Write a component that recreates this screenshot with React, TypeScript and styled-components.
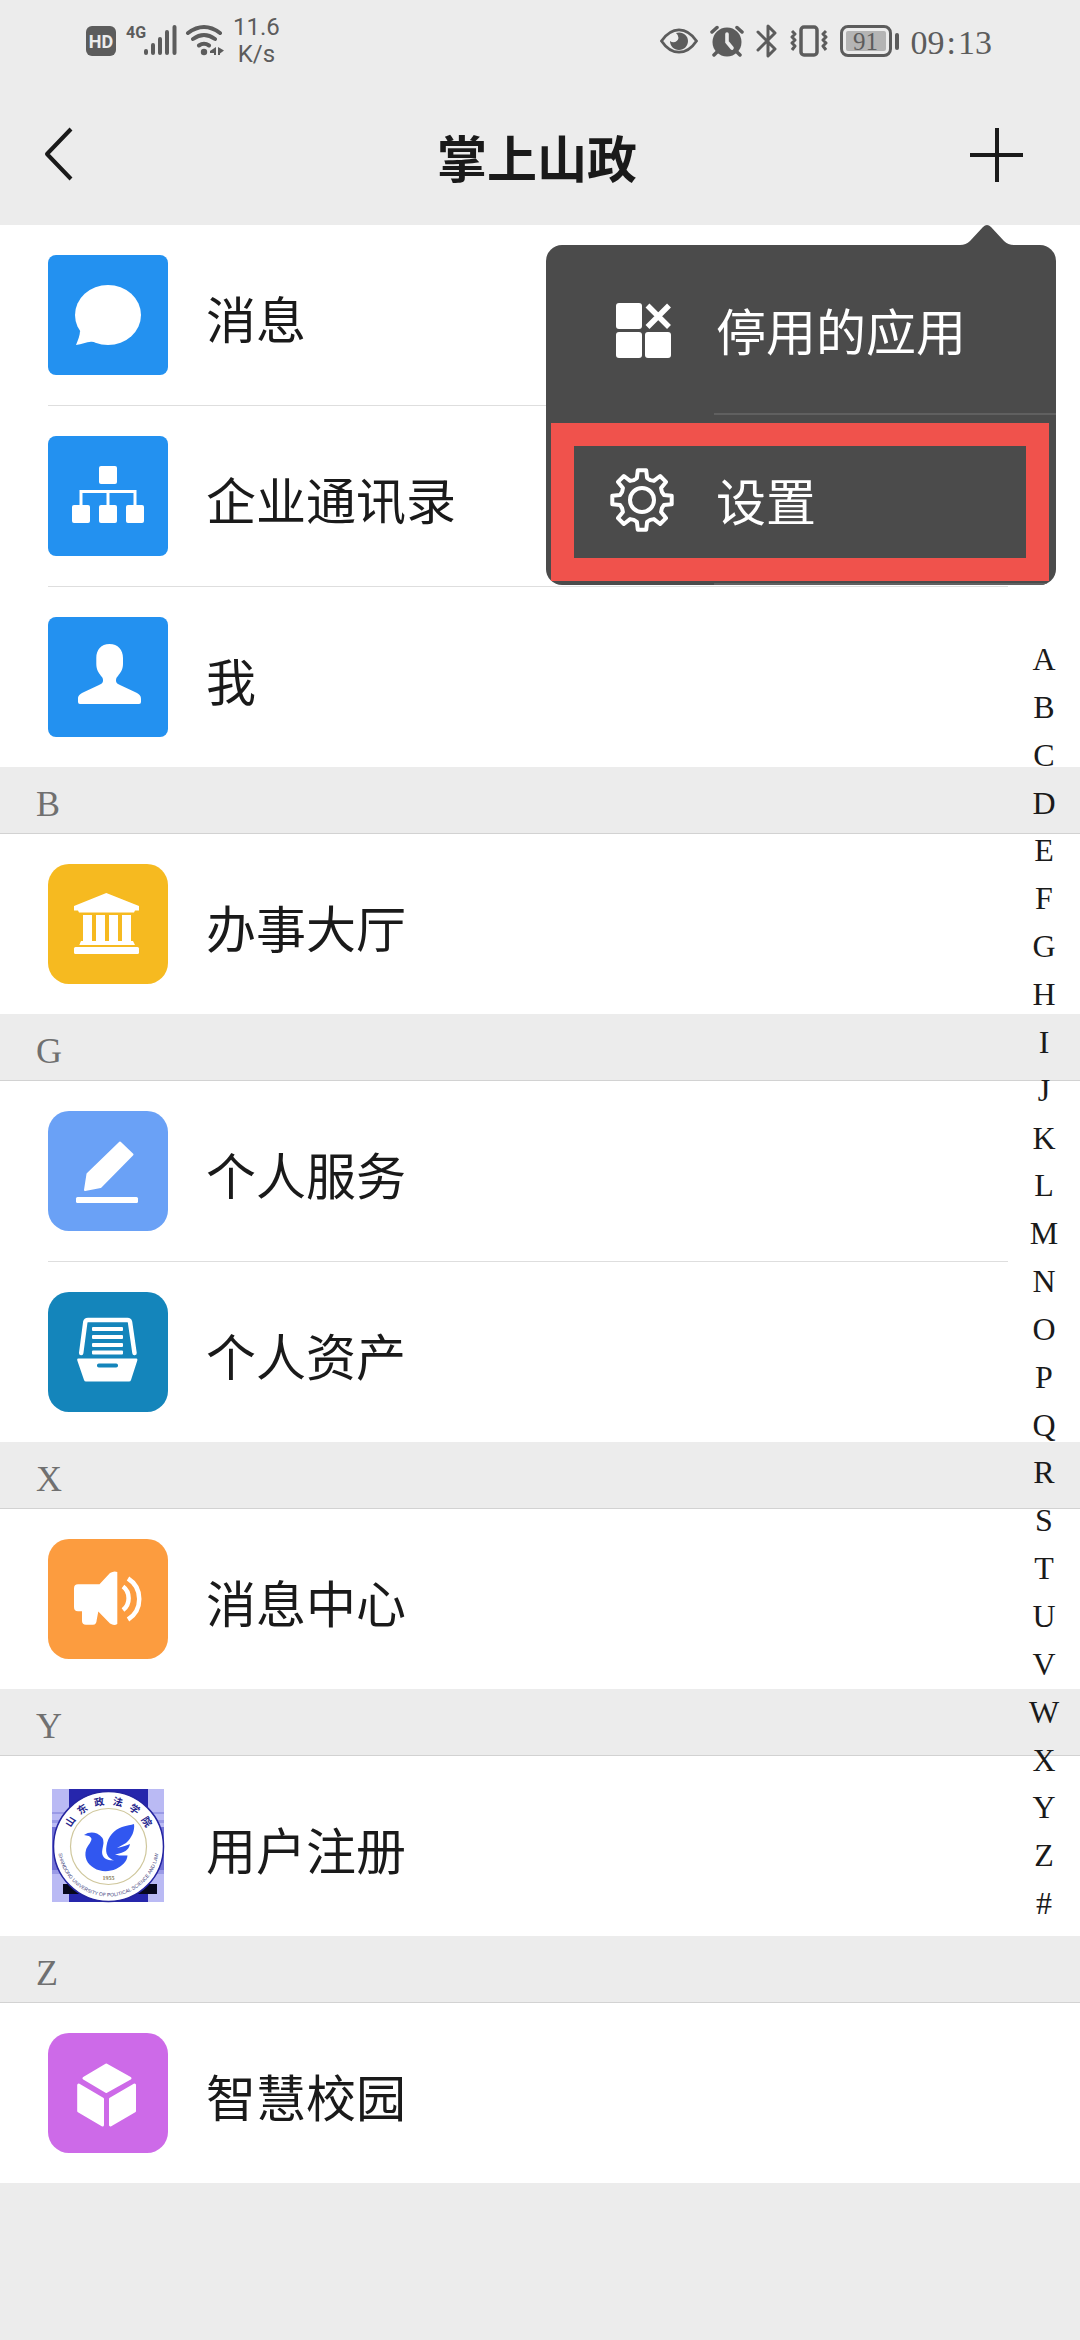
import React from "react";
import styled, { createGlobalStyle } from "styled-components";

const GlobalStyle = createGlobalStyle`
  *, *::before, *::after { box-sizing: border-box; }
  html { background: #ececec; }
  body { margin: 0; background: #ececec; }
`;

const cjk = `"Noto Sans CJK SC", sans-serif`;
const serif = `"Liberation Serif", "Noto Sans CJK SC", serif`;

const Screen = styled.div`
  position: relative;
  color: #1a1a1a;
  font-family: ${cjk};
`;

/* ---------- status bar ---------- */

const StatusBar = styled.div`
  display: flex;
  justify-content: space-between;
  align-items: center;
  height: 82px;
  padding: 0 88px 0 86px;
  color: #5c5c5c;
`;

const StatusGroup = styled.div<{ $gap: number }>`
  display: flex;
  align-items: center;
  gap: ${(p) => p.$gap}px;
`;

const NetSpeed = styled.div`
  font: 24px/27px Roboto, sans-serif;
  text-align: center;
`;

const Battery = styled.div`
  display: flex;
  align-items: center;
  gap: 3px;
  &::after {
    content: "";
    width: 4px;
    height: 17px;
    border-radius: 2px;
    background: #5c5c5c;
  }
`;

const BatteryBody = styled.div`
  width: 52px;
  height: 32px;
  padding: 3px;
  border: 3px solid #5c5c5c;
  border-radius: 8px;
`;

const BatteryLevel = styled.div`
  height: 20px;
  border-radius: 2px;
  background: #b4b4b4;
  font: 25px/22px ${serif};
  text-align: center;
`;

const Clock = styled.time`
  display: flex;
  gap: 2px;
  padding-top: 4px;
  font: 34px/36px ${serif};
`;

/* ---------- title bar ---------- */

const Header = styled.header`
  position: relative;
  background: #ececec;
`;

const TitleBar = styled.div`
  display: grid;
  grid-template-columns: 1fr auto 1fr;
  align-items: center;
  height: 143px;
  padding: 0 48px 0 42px;
`;

const Title = styled.h1`
  margin: 0;
  padding-top: 4px;
  font-size: 50px;
  line-height: 60px;
  font-weight: 700;
`;

const IconButton = styled.button<{ $end?: boolean }>`
  display: flex;
  justify-self: ${(p) => (p.$end ? "end" : "start")};
  padding: 4px 0;
  border: 0;
  background: none;
  color: #1a1a1a;
`;

/* ---------- popup menu ---------- */

const Menu = styled.div`
  position: absolute;
  z-index: 2;
  top: calc(100% + 20px);
  right: 24px;
  width: 510px;
  border-radius: 16px;
  background: #4b4b4b;
`;

const MenuArrow = styled.svg`
  position: absolute;
  right: 42px;
  bottom: 100%;
  display: block;
`;

const MenuItem = styled.button`
  position: relative;
  display: grid;
  grid-template-columns: 64px 1fr;
  gap: 40px;
  align-items: center;
  width: 100%;
  height: 170px;
  padding: 0 0 0 64px;
  border: 0;
  background: none;
  color: #fff;
  font-family: ${cjk};
  text-align: left;

  &:last-child {
    border-radius: 0 0 16px 16px;
    overflow: hidden;
  }
`;

const MenuLabel = styled.span`
  display: flex;
  align-items: center;
  height: 100%;
  padding-left: 2px;
  border-bottom: 2px solid #606060;
  font-size: 50px;
  line-height: 60px;
`;

const Highlight = styled.span`
  position: absolute;
  inset: 8px 7px 4px 5px;
  border: 23px solid #f0524c;
  pointer-events: none;
`;

/* ---------- list ---------- */

const Section = styled.section`
  background: #fff;
`;

const SectionTitle = styled.h2`
  margin: 0;
  height: 67px;
  padding: 8px 36px 0;
  border-bottom: 1px solid #d2d2d2;
  background: #ececec;
  color: #707070;
  font: 36px/58px ${serif};
`;

const Rows = styled.ul`
  margin: 0;
  padding: 0 72px 0 48px;
  list-style: none;
`;

const Row = styled.li`
  & + & {
    border-top: 1px solid #dedede;
  }
`;

const RowLink = styled.a`
  display: flex;
  align-items: center;
  gap: 38px;
  padding: 30px 0;
  color: inherit;
  text-decoration: none;
`;

const Tile = styled.span<{ $color: string; $round: number }>`
  flex: none;
  width: 120px;
  height: 120px;
  overflow: hidden;
  border-radius: ${(p) => p.$round}px;
  background: ${(p) => p.$color};
  color: #fff;
  svg { display: block; }
`;

const RowLabel = styled.span`
  padding-top: 4px;
  font-size: 50px;
  line-height: 60px;
`;

/* ---------- letter index ---------- */

const LetterIndex = styled.nav`
  position: absolute;
  z-index: 1;
  top: 636px;
  right: 0;
  display: grid;
  grid-auto-rows: 1fr;
  width: 72px;
  height: 1292px;
`;

const Letter = styled.a`
  color: #1a1a1a;
  font: 32px/47px ${serif};
  text-align: center;
  text-decoration: none;
`;

/* ---------- drawings ---------- */

const Glyph = ({ children }: { children: React.ReactNode }) => (
  <svg width="120" height="120" viewBox="0 0 120 120" fill="currentColor" aria-hidden="true">
    {children}
  </svg>
);

const ChatGlyph = () => (
  <Glyph>
    <ellipse cx="60" cy="60" rx="33" ry="30" />
    <path d="M28 90C30 85 32 80 32 76L46 82V87C40 85.500 35 89 28 90Z" />
  </Glyph>
);

const OrgGlyph = () => (
  <Glyph>
    <rect x="51" y="30" width="18" height="18" rx="2" />
    <rect x="24" y="69" width="18" height="18" rx="2" />
    <rect x="51" y="69" width="18" height="18" rx="2" />
    <rect x="78" y="69" width="18" height="18" rx="2" />
    <path d="M33 70V55.500H87V70M60 55.500V70" fill="none" stroke="currentColor" strokeWidth="3" />
  </Glyph>
);

const PersonGlyph = () => (
  <Glyph>
    <path d="M61.500 27C70 27 75 33 75 41V47C75 53 72 56 70 59C68 61 68 62 68 64C68 66 70 67 72 68L88 75.500C92 77.500 93 79 93 82V85Q93 87 91 87H32Q30 87 30 85V82C30 79 31 77.500 35 75.500L51 68C53 67 55 66 55 64C55 62 55 61 53 59C51 56 48.300 53 48.300 47V41C48.300 33 53 27 61.500 27Z" />
  </Glyph>
);

const HallGlyph = () => (
  <Glyph>
    <path d="M58.300 29L91 42V46.500H87L86 48.500H31L30 46.500H26V42Z" />
    {[35, 48, 61, 74].map((x) => (
      <rect key={x} x={x} y="51" width="9" height="26" />
    ))}
    <path d="M33 77H85L87 81H31.300Z" />
    <rect x="26" y="83" width="65" height="7" rx="1.500" />
  </Glyph>
);

const PencilGlyph = () => (
  <Glyph>
    <path d="M72 31.500L84.500 43.500L52.500 76L37 79L39.500 63Z" stroke="currentColor" strokeWidth="2" strokeLinejoin="round" />
    <rect x="28" y="86" width="62" height="6" rx="1.500" />
  </Glyph>
);

const DrawerGlyph = () => (
  <Glyph>
    <path d="M33.200 61L37.300 30Q37.700 28 40 28H79.500Q81.500 28 82 30L86.500 61" fill="none" stroke="currentColor" strokeWidth="4.500" strokeLinecap="round" />
    {[35, 43, 51, 58.5].map((y) => (
      <rect key={y} x="44" y={y} width="31" height="4" rx="1" />
    ))}
    <path d="M30 66.500H88.500Q89.800 66.500 89.300 68.500L83 88Q82.500 89.500 81 89.500H38Q36.500 89.500 36 88L29.300 68.500Q28.800 66.500 30 66.500Z" />
    <rect x="49" y="71.500" width="21" height="4" rx="1.800" fill="#1485bb" />
  </Glyph>
);

const HornGlyph = () => (
  <Glyph>
    <path d="M30 45.300H51.500L62 34Q66 31.500 69.300 33V85Q66 87 62 84.500L50.300 72.500L48.700 81Q48.500 85.700 45 85.700H38Q34 85.700 34 82V72.300H30Q26 72.300 26 68V49.500Q26 45.300 30 45.300Z" />
    <path d="M75 47.500C82.500 53 82.500 65.500 75 71M80 39.500C95 49 95 71 80 80.500" fill="none" stroke="currentColor" strokeWidth="4.500" />
  </Glyph>
);

const CubeGlyph = () => (
  <Glyph>
    <g stroke="currentColor" strokeWidth="3" strokeLinejoin="round">
      <path d="M58.300 32L82 45.300L58.300 58.500L36 45.300Z" />
      <path d="M30.700 52L54.500 66V92L30.700 78Z" />
      <path d="M62.500 66L86.500 52V78L62.500 92Z" />
    </g>
  </Glyph>
);

/* Each character of the school name stands on a ring of radius 45 round the emblem's centre. */
const ringAngles = [-57, -35, -12, 12, 35, 57];
const ringChars = ringAngles.map((deg) => {
  const a = (deg * Math.PI) / 180;
  const cx = 60.5 + 46 * Math.sin(a);
  const cy = 60.5 - 46 * Math.cos(a);
  return {
    x: cx - 5 * Math.cos(a) - 4 * Math.sin(a),
    y: cy - 5 * Math.sin(a) + 4 * Math.cos(a),
  };
});

const SchoolEmblem = () => (
  <svg width="120" height="120" viewBox="0 0 120 120" aria-hidden="true">
    <defs>
      <path id="ring-bottom" d="M11 50A50.500 50.500 0 1 0 110 50" />
    </defs>
    <rect x="4" y="3" width="112" height="113" fill="#babaf4" />
    <path d="M4 26H116V28H4ZM4 34H116V37H4ZM4 84H116V88H4Z" fill="#9a9ae6" />
    <rect x="4" y="41" width="112" height="43" fill="#7272d6" />
    <rect x="21" y="3" width="79" height="113" fill="#2626ac" />
    <path d="M15 98H34V108H15ZM88 98H109V108H88Z" fill="#07071c" />
    <circle cx="60.500" cy="60.500" r="55" fill="#fff" stroke="#2525a0" strokeWidth="1.500" />
    <circle cx="60.500" cy="60.500" r="38" fill="none" stroke="#cfc79c" strokeWidth="1.200" />
    <text
      x={ringChars.map((c) => c.x.toFixed(1)).join(" ")}
      y={ringChars.map((c) => c.y.toFixed(1)).join(" ")}
      rotate={ringAngles.join(" ")}
      fill="#26268c"
      fontFamily='"Noto Sans CJK SC", sans-serif'
      fontSize="10"
      fontWeight="700"
    >
      山东政法学院
    </text>
    <text fill="#44447e" fontFamily='"Liberation Sans", sans-serif' fontSize="5">
      <textPath href="#ring-bottom" startOffset="50%" textAnchor="middle">
        SHANDONG UNIVERSITY OF POLITICAL SCIENCE AND LAW
      </textPath>
    </text>
    <path
      d="M36 49Q42 45 49 47.500Q56 51 55.500 57C55 62 53 66 55 70C57 74 61 74 66 74.500C60 72 57 68 58.500 60C60 50 66 44 74 41C79 39.500 83 39 86 38C87 44 84 52 78 57L69 62C75 61 79 59 82 58C81 64 76 67 67 68.500C72 70 76 69.500 79.500 69.500C79 76 74 80 68 83C61 86 52 86 46 82C39 78 36 71 38 64C39 60 43 57 43.500 53C43 50 39 49.500 36 49Z"
      fill="#3157f0"
    />
    <text x="60.500" y="94" textAnchor="middle" fill="#8d7f5c" fontFamily='"Liberation Serif", serif' fontSize="6" fontWeight="700">
      1955
    </text>
  </svg>
);

const DisabledAppsGlyph = () => (
  <svg width="64" height="64" viewBox="0 0 64 64" fill="currentColor" aria-hidden="true">
    <rect x="6" y="5" width="26" height="26" rx="3" />
    <rect x="6" y="34" width="26" height="26" rx="3" />
    <rect x="35" y="34" width="26" height="26" rx="3" />
    <path d="M37.500 7.500L59 29M59 7.500L37.500 29" stroke="currentColor" strokeWidth="5.500" />
  </svg>
);

const gearOutline = Array.from({ length: 8 }, (_, i) => {
  const points: [number, number][] = [[-22.5, 21.5], [-13, 22.5], [-8, 30], [8, 30], [13, 22.5]];
  return points
    .map(([deg, r]) => {
      const a = ((i * 45 + deg - 90) * Math.PI) / 180;
      return `${(32 + r * Math.cos(a)).toFixed(1)} ${(32 + r * Math.sin(a)).toFixed(1)}`;
    })
    .join("L");
}).join("L");

const GearGlyph = () => (
  <svg width="64" height="64" viewBox="0 0 64 64" fill="none" stroke="currentColor" strokeWidth="4" strokeLinejoin="round" aria-hidden="true">
    <path d={`M${gearOutline}Z`} />
    <circle cx="32" cy="32" r="12" />
  </svg>
);

const SignalCluster = () => (
  <svg width="138" height="34" viewBox="86 24 138 34" fill="currentColor" role="img" aria-label="HD 4G Wi-Fi">
    <rect x="86" y="26" width="30" height="30" rx="6" />
    <text x="101" y="48" textAnchor="middle" fill="#ececec" fontFamily="Roboto, sans-serif" fontSize="18" fontWeight="700">HD</text>
    <text x="126" y="38" fontFamily="Roboto, sans-serif" fontSize="16" fontWeight="700">4G</text>
    <g stroke="currentColor" strokeWidth="4" strokeLinecap="round">
      <path d="M146 51V53M153 45V53M160 39V53M167 32V53M174.500 27V53" />
    </g>
    <g fill="none" stroke="currentColor" strokeWidth="4" strokeLinecap="round">
      <path d="M188 33Q204 21 220 33M193 39Q204 31 215 39M199 45.500Q204 42 209 45.500" />
    </g>
    <circle cx="204" cy="52" r="3.200" />
    <path d="M210 51L216 47V55H214V53H210ZM218 47V55H220V53.500L224 50.500Z" />
  </svg>
);

const EyeGlyph = () => (
  <svg width="38" height="26" viewBox="0 0 38 26" aria-hidden="true">
    <path d="M1.500 13Q9 1.800 19 1.800T36.500 13Q29 24.200 19 24.200T1.500 13Z" fill="none" stroke="currentColor" strokeWidth="2.800" />
    <path d="M16 5C22 3 28 7 28 13C28 18 24 22 19 22C14 22 10 18 10 13C13 15.500 18 14 18.500 10Q18.500 7 16 5Z" fill="currentColor" />
  </svg>
);

const AlarmGlyph = () => (
  <svg width="34" height="32" viewBox="0 0 34 32" aria-hidden="true">
    <circle cx="17" cy="17" r="14.500" fill="currentColor" />
    <path d="M2 7L7 2.500M32 7L27 2.500M4 30L8 26M30 30L26 26" stroke="currentColor" strokeWidth="3.500" strokeLinecap="round" />
    <path d="M17 9V17L22 23" fill="none" stroke="#ececec" strokeWidth="3.600" strokeLinecap="round" />
  </svg>
);

const BluetoothGlyph = () => (
  <svg width="22" height="34" viewBox="0 0 22 34" aria-hidden="true">
    <path d="M2 8L19 25L12 32V2L19 9L2 26" fill="none" stroke="currentColor" strokeWidth="3" strokeLinejoin="round" strokeLinecap="round" />
  </svg>
);

const VibrateGlyph = () => (
  <svg width="38" height="32" viewBox="0 0 38 32" fill="none" stroke="currentColor" strokeWidth="3.500" aria-hidden="true">
    <rect x="11" y="2" width="16" height="28" rx="3" />
    <path d="M2 6L5 9L2 12L5 15L2 18L5 21L2 25M36 6L33 9L36 12L33 15L36 18L33 21L36 25" strokeWidth="3" strokeLinejoin="round" />
  </svg>
);

/* ---------- data ---------- */

type App = { name: string; color: string; round: number; icon: React.ReactNode };

const groups: { letter?: string; apps: App[] }[] = [
  {
    apps: [
      { name: "消息", color: "#2391f0", round: 8, icon: <ChatGlyph /> },
      { name: "企业通讯录", color: "#2391f0", round: 8, icon: <OrgGlyph /> },
      { name: "我", color: "#2391f0", round: 8, icon: <PersonGlyph /> },
    ],
  },
  { letter: "B", apps: [{ name: "办事大厅", color: "#f6ba20", round: 21, icon: <HallGlyph /> }] },
  {
    letter: "G",
    apps: [
      { name: "个人服务", color: "#6aa1f6", round: 21, icon: <PencilGlyph /> },
      { name: "个人资产", color: "#1485bb", round: 21, icon: <DrawerGlyph /> },
    ],
  },
  { letter: "X", apps: [{ name: "消息中心", color: "#fc9c3f", round: 21, icon: <HornGlyph /> }] },
  { letter: "Y", apps: [{ name: "用户注册", color: "#ffffff", round: 0, icon: <SchoolEmblem /> }] },
  { letter: "Z", apps: [{ name: "智慧校园", color: "#cd6ae8", round: 21, icon: <CubeGlyph /> }] },
];

const letters = "ABCDEFGHIJKLMNOPQRSTUVWXYZ#".split("");

export default function App() {
  return (
    <Screen>
      <GlobalStyle />
      <Header>
        <StatusBar>
          <StatusGroup $gap={9}>
            <SignalCluster />
            <NetSpeed>
              11.6
              <br />
              K/s
            </NetSpeed>
          </StatusGroup>
          <StatusGroup $gap={12}>
            <EyeGlyph />
            <AlarmGlyph />
            <BluetoothGlyph />
            <VibrateGlyph />
            <Battery>
              <BatteryBody>
                <BatteryLevel>91</BatteryLevel>
              </BatteryBody>
            </Battery>
            <Clock>
              <span>09</span>
              <span>:</span>
              <span>13</span>
            </Clock>
          </StatusGroup>
        </StatusBar>
        <TitleBar>
          <IconButton aria-label="返回">
            <svg width="36" height="56" viewBox="0 0 36 56" fill="none" stroke="currentColor" strokeWidth="4" aria-hidden="true">
              <path d="M29 3L5 28L29 53" strokeLinejoin="round" />
            </svg>
          </IconButton>
          <Title>掌上山政</Title>
          <IconButton $end aria-label="更多" aria-expanded="true">
            <svg width="62" height="56" viewBox="0 0 62 56" stroke="currentColor" strokeWidth="4" aria-hidden="true">
              <path d="M0 29H53M27 2V56" />
            </svg>
          </IconButton>
        </TitleBar>
        <Menu role="menu">
          <MenuArrow width="54" height="20" viewBox="0 0 54 20" aria-hidden="true">
            <path d="M0 20Q6 20 10 16L23 2Q27 -2 31 2L44 16Q48 20 54 20Z" fill="#4b4b4b" />
          </MenuArrow>
          <MenuItem role="menuitem">
            <DisabledAppsGlyph />
            <MenuLabel>停用的应用</MenuLabel>
          </MenuItem>
          <MenuItem role="menuitem">
            <GearGlyph />
            <MenuLabel>设置</MenuLabel>
            <Highlight />
          </MenuItem>
        </Menu>
      </Header>
      <main>
        {groups.map((group) => (
          <Section key={group.letter ?? "top"} id={group.letter && `section-${group.letter}`}>
            {group.letter && <SectionTitle>{group.letter}</SectionTitle>}
            <Rows>
              {group.apps.map((app) => (
                <Row key={app.name}>
                  <RowLink href="#">
                    <Tile $color={app.color} $round={app.round}>{app.icon}</Tile>
                    <RowLabel>{app.name}</RowLabel>
                  </RowLink>
                </Row>
              ))}
            </Rows>
          </Section>
        ))}
      </main>
      <LetterIndex aria-label="字母索引">
        {letters.map((l) => (
          <Letter key={l} href={`#section-${l}`}>{l}</Letter>
        ))}
      </LetterIndex>
    </Screen>
  );
}
